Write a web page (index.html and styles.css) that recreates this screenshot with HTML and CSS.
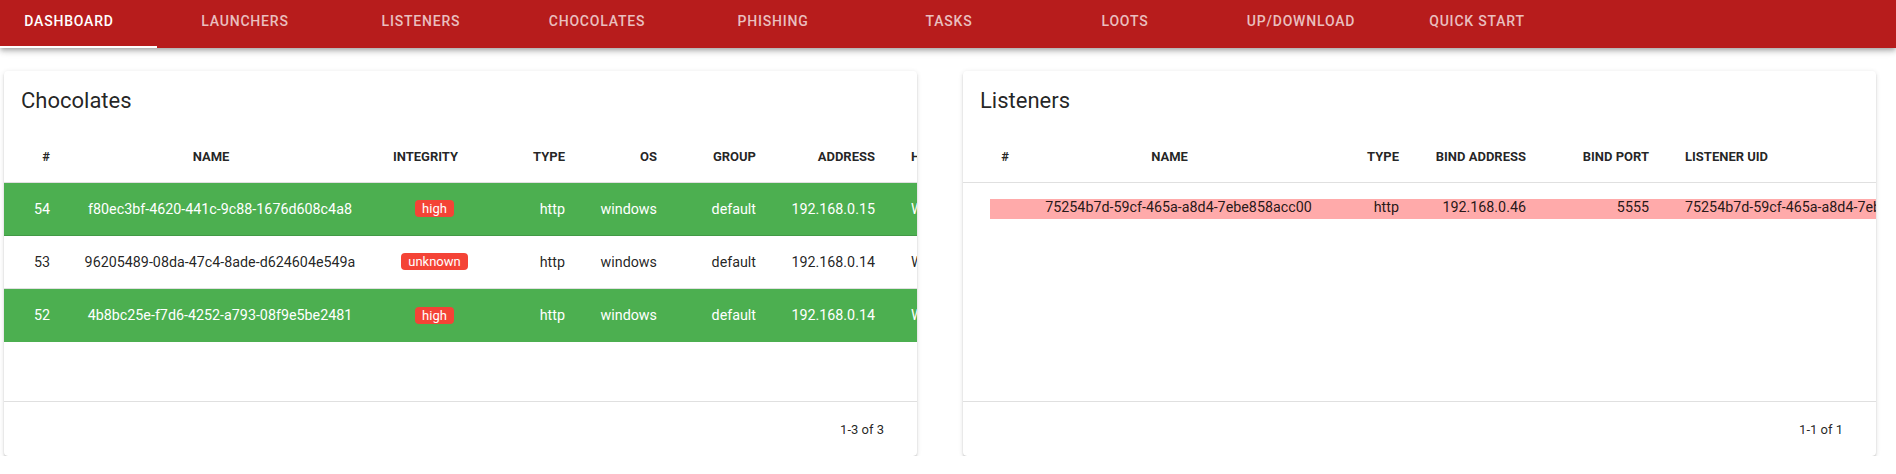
FILE: index.html
```html
<!DOCTYPE html>
<html>
<head>
<meta charset="utf-8">
<link rel="stylesheet" href="styles.css">
</head>
<body>
<header class="appbar">
  <nav class="tabs">
    <div class="tab active">Dashboard</div>
    <div class="tab">Launchers</div>
    <div class="tab">Listeners</div>
    <div class="tab">Chocolates</div>
    <div class="tab">Phishing</div>
    <div class="tab">Tasks</div>
    <div class="tab">Loots</div>
    <div class="tab">Up/Download</div>
    <div class="tab">Quick Start</div>
  </nav>
</header>
<main class="main">
  <section class="card">
    <div class="card-title">Chocolates</div>
    <div class="table-wrap">
      <table class="tbl tbl-choc">
        <colgroup>
          <col class="c-num"><col class="c-name"><col class="c-int"><col class="c-type"><col class="c-os"><col class="c-group"><col class="c-addr"><col class="c-host">
        </colgroup>
        <thead>
          <tr>
            <th class="end">#</th>
            <th class="center">NAME<span class="sort-ico"></span></th>
            <th class="center">INTEGRITY<span class="sort-ico"></span></th>
            <th class="end">TYPE</th>
            <th class="end">OS</th>
            <th class="end">GROUP</th>
            <th class="end">ADDRESS</th>
            <th class="start">HOSTNAME</th>
          </tr>
        </thead>
        <tbody>
          <tr class="row-green">
            <td class="end">54</td>
            <td class="center">f80ec3bf-4620-441c-9c88-1676d608c4a8</td>
            <td class="center"><span class="chip">high</span></td>
            <td class="end">http</td>
            <td class="end">windows</td>
            <td class="end">default</td>
            <td class="end">192.168.0.15</td>
            <td class="start">WIN-DESKTOP</td>
          </tr>
          <tr>
            <td class="end">53</td>
            <td class="center">96205489-08da-47c4-8ade-d624604e549a</td>
            <td class="center"><span class="chip">unknown</span></td>
            <td class="end">http</td>
            <td class="end">windows</td>
            <td class="end">default</td>
            <td class="end">192.168.0.14</td>
            <td class="start">WIN-LAPTOP</td>
          </tr>
          <tr class="row-green">
            <td class="end">52</td>
            <td class="center">4b8bc25e-f7d6-4252-a793-08f9e5be2481</td>
            <td class="center"><span class="chip">high</span></td>
            <td class="end">http</td>
            <td class="end">windows</td>
            <td class="end">default</td>
            <td class="end">192.168.0.14</td>
            <td class="start">WIN-LAPTOP</td>
          </tr>
        </tbody>
      </table>
    </div>
    <div class="card-footer">1-3 of 3</div>
  </section>
  <section class="card">
    <div class="card-title">Listeners</div>
    <div class="table-wrap">
      <table class="tbl tbl-lis">
        <colgroup>
          <col class="l-num"><col class="l-name"><col class="l-type"><col class="l-addr"><col class="l-port"><col class="l-uid">
        </colgroup>
        <thead>
          <tr>
            <th class="end">#</th>
            <th class="center">NAME<span class="sort-ico"></span></th>
            <th class="end">TYPE</th>
            <th class="end">BIND ADDRESS</th>
            <th class="end">BIND PORT</th>
            <th class="start">LISTENER UID</th>
          </tr>
        </thead>
        <tbody>
          <tr class="row-pink">
            <td class="end"></td>
            <td class="center">75254b7d-59cf-465a-a8d4-7ebe858acc00</td>
            <td class="end">http</td>
            <td class="end">192.168.0.46</td>
            <td class="end">5555</td>
            <td class="start">75254b7d-59cf-465a-a8d4-7ebe858acc00</td>
          </tr>
        </tbody>
      </table>
    </div>
    <div class="card-footer">1-1 of 1</div>
  </section>
</main>
</body>
</html>
```
FILE: styles.css
```css
* { box-sizing: border-box; }
body {
  margin: 0;
  font-family: Roboto, "Noto Sans", "Liberation Sans", sans-serif;
  background: #ffffff;
  color: rgba(0, 0, 0, 0.87);
}
.appbar {
  position: relative;
  z-index: 2;
  height: 48px;
  background: #b71c1c;
  overflow: hidden;
  box-shadow: 0 2px 4px -1px rgba(0,0,0,.2), 0 4px 5px 0 rgba(0,0,0,.14), 0 1px 10px 0 rgba(0,0,0,.12);
}
.tabs {
  display: flex;
  height: 48px;
  margin-left: -19px;
}
.tab {
  flex: 0 0 176px;
  height: 48px;
  display: flex;
  align-items: center;
  justify-content: center;
  padding-bottom: 6px;
  font-size: 14px;
  font-weight: 500;
  letter-spacing: 0.8px;
  text-transform: uppercase;
  color: rgba(255, 255, 255, 0.72);
  white-space: nowrap;
}
.tab.active {
  color: #ffffff;
  box-shadow: inset 0 -2px 0 #ffffff;
}
.main {
  display: flex;
  gap: 46px;
  padding: 23px 20px 0 4px;
}
.card {
  flex: 1 1 0;
  min-width: 0;
  background: #ffffff;
  border-radius: 4px;
  overflow: hidden;
  box-shadow: 0 3px 1px -2px rgba(0,0,0,.2), 0 2px 2px 0 rgba(0,0,0,.14), 0 1px 5px 0 rgba(0,0,0,.12);
}
.card-title {
  font-size: 22px;
  line-height: 32px;
  font-weight: 400;
  padding: 14px 16px 17px 17px;
  color: rgba(0, 0, 0, 0.87);
}
.table-wrap {
  height: 267px;
  overflow: hidden;
}
.tbl {
  border-spacing: 0;
  table-layout: fixed;
}
.tbl-choc { width: 1040px; }
.tbl-lis { width: 1030px; }
.c-num { width: 62px; }
.c-name { width: 308px; }
.c-int { width: 121px; }
.c-type { width: 86px; }
.c-os { width: 92px; }
.c-group { width: 99px; }
.c-addr { width: 119px; }
.c-host { width: 153px; }
.l-num { width: 62px; }
.l-name { width: 307px; }
.l-type { width: 83px; }
.l-addr { width: 127px; }
.l-port { width: 123px; }
.l-uid { width: 328px; }
.tbl th {
  height: 49px;
  padding: 0 16px 3px;
  font-size: 13px;
  font-weight: 700;
  color: rgba(0, 0, 0, 0.87);
  border-bottom: 1px solid rgba(0, 0, 0, 0.12);
  white-space: nowrap;
  overflow: hidden;
}
.tbl td {
  padding: 0 16px 1px;
  font-size: 14.3px;
  white-space: nowrap;
  overflow: hidden;
  border-bottom: 1px solid rgba(0, 0, 0, 0.12);
}
.tbl-choc td { height: 53px; }
.tbl-lis td { height: 48px; }
.tbl tbody tr:last-child td { border-bottom: 0; }
.tbl .end { text-align: right; }
.tbl .center { text-align: center; }
.tbl .start { text-align: left; padding-left: 20px; }
.sort-ico {
  display: inline-block;
  width: 18px;
  height: 1px;
}
.row-green td {
  background: #4caf50;
  color: #ffffff;
}
.row-pink td {
  background: linear-gradient(#ffaaaa, #ffaaaa) no-repeat;
  background-size: 100% 20px;
  background-position: 0 16px;
}
.row-pink td:first-child {
  background-position: 27px 16px;
}
.chip {
  display: inline-block;
  height: 17px;
  line-height: 17px;
  padding: 0 7px;
  border-radius: 4px;
  background: #f44336;
  color: #ffffff;
  font-size: 13px;
  vertical-align: middle;
}
.card-footer {
  height: 55px;
  border-top: 1px solid rgba(0, 0, 0, 0.12);
  display: flex;
  align-items: center;
  justify-content: flex-end;
  padding-right: 33px;
  font-size: 13px;
}
```
